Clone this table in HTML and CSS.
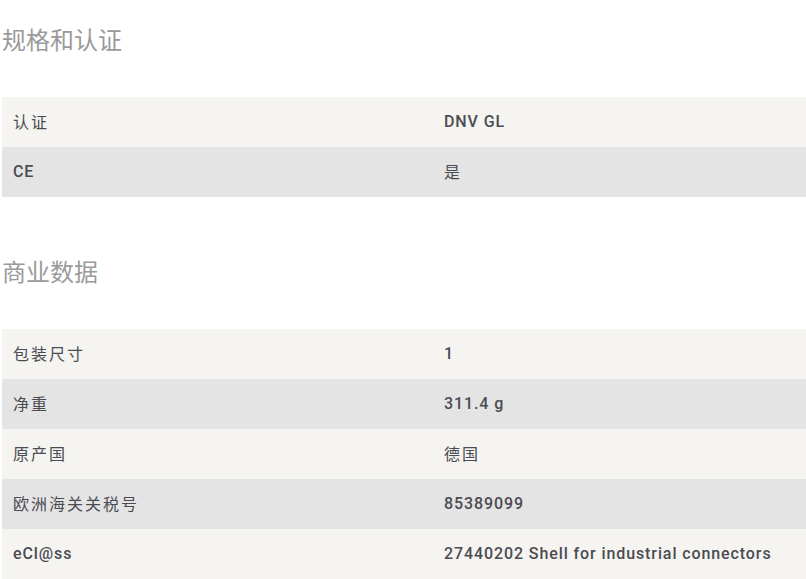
FILE: index.html
```html
<!DOCTYPE html>
<html lang="zh">
<head>
<meta charset="utf-8">
<link rel="stylesheet" href="styles.css">
</head>
<body>
<div class="page">
  <section class="section first">
    <h2 class="title">规格和认证</h2>
    <table class="spec">
      <tr class="odd"><td class="label cjk">认证</td><td class="value">DNV GL</td></tr>
      <tr class="even"><td class="label">CE</td><td class="value cjk">是</td></tr>
    </table>
  </section>
  <section class="section">
    <h2 class="title">商业数据</h2>
    <table class="spec">
      <tr class="odd"><td class="label cjk">包装尺寸</td><td class="value">1</td></tr>
      <tr class="even"><td class="label cjk">净重</td><td class="value">311.4 g</td></tr>
      <tr class="odd"><td class="label cjk">原产国</td><td class="value cjk">德国</td></tr>
      <tr class="even"><td class="label cjk">欧洲海关关税号</td><td class="value">85389099</td></tr>
      <tr class="odd"><td class="label">eCl@ss</td><td class="value">27440202 Shell for industrial connectors</td></tr>
    </table>
  </section>
</div>
</body>
</html>
```
FILE: styles.css
```css
html, body {
  margin: 0;
  padding: 0;
  background: #ffffff;
}
.page {
  padding: 22px 0 0 2px;
  font-family: Roboto, "Noto Sans CJK SC", sans-serif;
}
.section + .section {
  margin-top: 57px;
}
.title {
  margin: 0 0 41px 0;
  font-family: "Noto Sans CJK SC", sans-serif;
  font-size: 24px;
  line-height: 34px;
  font-weight: 400;
  color: #9a9a9a;
}
.spec {
  width: 804px;
  border-collapse: collapse;
}
.spec td {
  height: 49px;
  padding: 0 11px 1px 11px;
  font-size: 16px;
  font-weight: 500;
  letter-spacing: 0.9px;
  color: #4b4b52;
  vertical-align: middle;
}
.spec td.cjk {
  font-family: "Noto Sans CJK SC", sans-serif;
  font-weight: 400;
  letter-spacing: 2px;
  padding-bottom: 3px;
  height: 47px;
}
.spec .label {
  width: 409px;
}
.spec .odd {
  background: #f5f4f1;
}
.spec .even {
  background: #e4e4e4;
}
```
